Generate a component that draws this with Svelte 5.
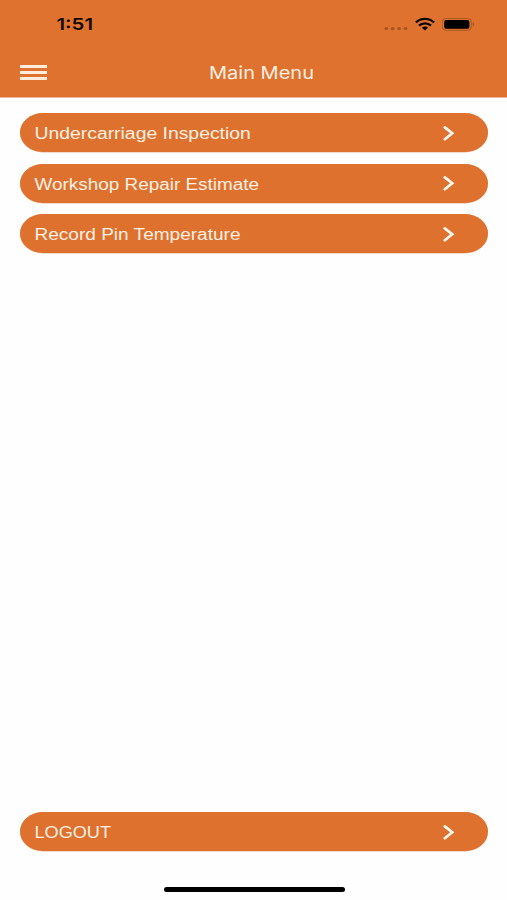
<script>
  const items = [
    { label: 'Undercarriage Inspection', width: 216.3 },
    { label: 'Workshop Repair Estimate', width: 224.5 },
    { label: 'Record Pin Temperature', width: 206 }
  ];
  const logout = { label: 'LOGOUT', width: 76.5 };
</script>

{#snippet pill(item)}
  <button class="pill">
    <svg class="label" width="260" height="39" viewBox="0 0 260 39" aria-label={item.label}>
      <text x="0.5" y="25.8" textLength={item.width} lengthAdjust="spacingAndGlyphs">{item.label}</text>
    </svg>
    <svg class="chevron" width="12" height="16" viewBox="0 0 12 16" aria-hidden="true">
      <path d="M1.8 2.4 L9.2 8.3 L1.8 14.2" />
    </svg>
  </button>
{/snippet}

<div class="screen">
  <header>
    <div class="status">
      <svg class="time" width="42" height="20" viewBox="0 0 42 20">
        <text x="1.5" y="16.4" textLength="36.5" lengthAdjust="spacingAndGlyphs">1:51</text>
      </svg>
      <div class="indicators">
        <svg width="24" height="14" viewBox="0 0 24 14" fill="#a75622" aria-hidden="true">
          <ellipse cx="2.3" cy="11.6" rx="1.9" ry="1.6" />
          <ellipse cx="8.7" cy="11.6" rx="1.9" ry="1.6" />
          <ellipse cx="15.1" cy="11.6" rx="1.9" ry="1.6" />
          <ellipse cx="21.5" cy="11.6" rx="1.9" ry="1.6" />
        </svg>
        <svg width="20" height="14" viewBox="0 0 20 14" aria-hidden="true">
          <g fill="none" stroke="#080402" stroke-width="2.3">
            <path d="M0.9 5.5 C6 0.7 14 0.7 19.1 5.5" />
            <path d="M4 8.7 C7.3 5.5 12.7 5.5 16 8.7" />
          </g>
          <path d="M6.9 10.8 C8.6 9.2 11.4 9.2 13.1 10.8 L10 13.4 Z" fill="#080402" />
        </svg>
        <svg width="34" height="14" viewBox="0 0 34 14" aria-hidden="true">
          <rect x="0.2" y="1.5" width="29.2" height="11.8" rx="3.8" fill="none" stroke="#a95925" stroke-width="1" />
          <rect x="2.2" y="3" width="25.2" height="8.8" rx="2" fill="#000" />
          <path d="M30.7 5.3 C32.8 6 32.8 8.8 30.7 9.5 Z" fill="#a95925" />
        </svg>
      </div>
    </div>
    <div class="toolbar">
      <button class="menu" aria-label="Menu"><i></i><i></i><i></i></button>
      <svg class="title" width="110" height="28" viewBox="0 0 110 28">
        <text x="4" y="20.8" textLength="105" lengthAdjust="spacingAndGlyphs">Main Menu</text>
      </svg>
    </div>
  </header>
  <main>
    {#each items as item}
      {@render pill(item)}
    {/each}
  </main>
  <footer>
    {@render pill(logout)}
    <div class="home"></div>
  </footer>
</div>

<style>
  :global(body) { margin: 0; background: #fff; }
  .screen {
    width: 507px;
    height: 900px;
    display: flex;
    flex-direction: column;
    background: #fefefe;
    font-family: Inter, "Liberation Sans", sans-serif;
    overflow: hidden;
  }
  svg { display: block; flex: none; }
  header {
    box-sizing: border-box;
    height: 98px;
    background: #de722e;
    border-bottom: 1px solid #efb797;
  }
  .status {
    display: flex;
    align-items: flex-start;
    justify-content: space-between;
    height: 44px;
    padding: 14px 31px 0 55px;
    box-sizing: border-box;
  }
  .time text { font-size: 16.5px; font-weight: 600; fill: #120802; }
  .indicators { display: flex; gap: 7px; padding-top: 3px; }
  .toolbar {
    display: grid;
    grid-template-columns: 1fr 110px 1fr;
    align-items: center;
    height: 28px;
    padding: 14px 0 0 19.5px;
    margin-right: 3.5px;
  }
  .title { margin-left: -2px; }
  .title text { font-size: 17px; fill: #fff0e3; }
  button { border: 0; background: none; padding: 0; margin: 0; }
  .menu {
    width: 27px;
    display: flex;
    flex-direction: column;
    gap: 3px;
  }
  .menu i { height: 3px; background: #ffeddd; }
  main {
    display: flex;
    flex-direction: column;
    gap: 11.5px;
    padding: 15.4px 19px 0 20px;
    flex: 1;
  }
  .pill {
    box-sizing: border-box;
    width: 100%;
    height: 39px;
    display: flex;
    align-items: center;
    justify-content: space-between;
    padding: 0 33px 0 13.5px;
    border-radius: 23px / 19.5px;
    background: #de712e;
    box-shadow: 0 0.5px 0.5px #eeb392;
  }
  .label text { font-size: 15.6px; fill: #fff0e3; }
  .chevron path {
    fill: none;
    stroke: #fff8f2;
    stroke-width: 2.7;
    stroke-linecap: round;
  }
  footer {
    height: 87.6px;
    padding: 0 19px 0 20px;
    display: flex;
    flex-direction: column;
    align-items: center;
  }
  .home {
    width: 181px;
    height: 5px;
    margin-top: 35.6px;
    border-radius: 3px;
    background: #000;
  }
</style>
